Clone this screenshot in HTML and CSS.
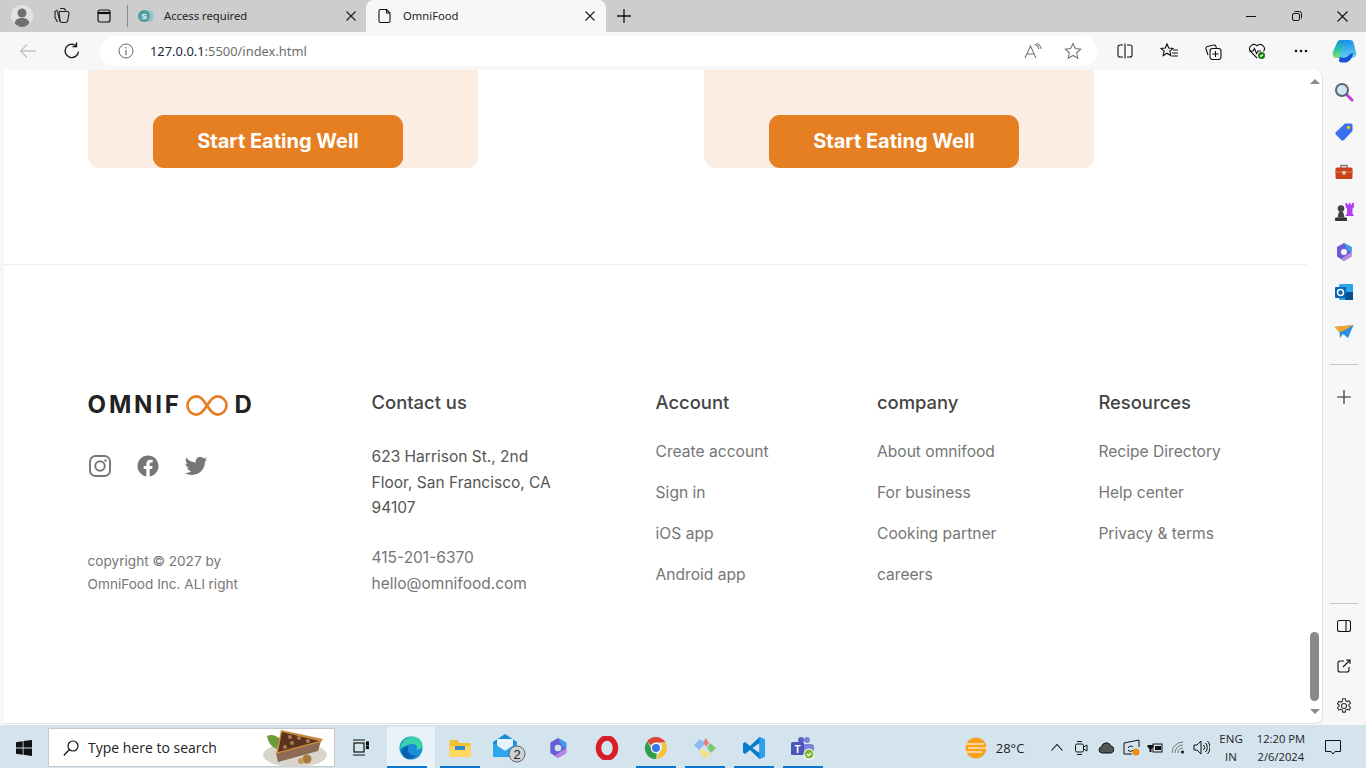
FILE: index.html
```html
<!DOCTYPE html>
<html lang="en">
<head>
<meta charset="utf-8">
<title>OmniFood</title>
<link rel="stylesheet" href="styles.css">
</head>
<body>
<div class="tabstrip">
  <div class="avatar-slot">
    <svg width="24" height="24" viewBox="0 0 24 24"><circle cx="12" cy="12" r="11" fill="#e3e3e3"/><circle cx="12" cy="9" r="4.5" fill="#707070"/><path d="M4.5 19c1-4 4-5 7.500-5s6.500 1 7.500 5c-2 2.500-5 4-7.500 4s-5.500-1.500-7.500-4z" fill="#707070"/></svg>
  </div>
  <div class="strip-icon">
    <svg width="18" height="18" viewBox="0 0 18 18" fill="none" stroke="#222" stroke-width="1.100"><path d="M7 1.500h4l2 2M4.500 3 2 4.500v6l2.500 4.500"/><path d="M6 4.500h8.500a1.500 1.500 0 0 1 1.500 1.800l-1.200 7a2.500 2.500 0 0 1-2.500 2.200H9a2 2 0 0 1-2-1.800z"/><path d="M4.500 4.500 7 14.500"/></svg>
  </div>
  <div class="strip-icon">
    <svg width="16" height="16" viewBox="0 0 16 16" fill="none" stroke="#111" stroke-width="1.200"><rect x="2" y="2" width="12" height="12" rx="2"/><path d="M2 5h12" stroke-width="2.200"/></svg>
  </div>
  <div class="strip-sep"></div>
  <div class="tab">
    <svg class="tab-favicon" width="16" height="16" viewBox="0 0 16 16"><circle cx="10" cy="8" r="6" fill="#8fc6c8"/><circle cx="6" cy="8" r="6" fill="#4f9ea4"/><text x="3.500" y="11" class="favicon-letter">S</text></svg>
    <span class="tab-title">Access required</span>
    <svg class="tab-close" width="10" height="10" viewBox="0 0 10 10" stroke="#222" stroke-width="1.200"><path d="M0.500 0.500l9 9M9.500 0.500l-9 9"/></svg>
  </div>
  <div class="tab tab-active">
    <svg class="tab-favicon" width="16" height="16" viewBox="0 0 16 16" fill="none" stroke="#111" stroke-width="1.100"><path d="M3.500 1.500h6l3.500 3.500v8a1.500 1.500 0 0 1-1.500 1.500h-8A1.500 1.500 0 0 1 2 13V3a1.500 1.500 0 0 1 1.500-1.500zM9.500 1.500V5H13"/></svg>
    <span class="tab-title">OmniFood</span>
    <svg class="tab-close" width="10" height="10" viewBox="0 0 10 10" stroke="#222" stroke-width="1.200"><path d="M0.500 0.500l9 9M9.500 0.500l-9 9"/></svg>
  </div>
  <div class="new-tab">
    <svg width="14" height="14" viewBox="0 0 14 14" stroke="#111" stroke-width="1.300"><path d="M7 0v14M0 7h14"/></svg>
  </div>
  <div class="window-controls">
    <svg width="10" height="10" viewBox="0 0 10 10" stroke="#111"><path d="M0 5.500h10"/></svg>
    <svg width="10" height="10" viewBox="0 0 10 10" fill="none" stroke="#111"><rect x="0.500" y="2.500" width="7" height="7" rx="1.500"/><path d="M2.500 0.500h5a2 2 0 0 1 2 2v5"/></svg>
    <svg width="11" height="11" viewBox="0 0 11 11" stroke="#111" stroke-width="1.100"><path d="M0.500 0.500l10 10M10.500 0.500l-10 10"/></svg>
  </div>
</div>

<div class="toolbar">
  <svg class="tool-back" width="18" height="16" viewBox="0 0 18 16" fill="none" stroke="#c4c4c4" stroke-width="1.300"><path d="M17 8H1.500M8 1.500 1.500 8 8 14.500"/></svg>
  <svg class="tool-reload" width="18" height="18" viewBox="0 0 18 18" fill="none" stroke="#111" stroke-width="1.300"><path d="M15.500 9.500A6.700 6.700 0 1 1 13 3.600"/><path d="M13.500 0.500v4h-4"/></svg>
  <div class="address">
    <svg class="info-icon" width="16" height="16" viewBox="0 0 16 16" fill="none" stroke="#666"><circle cx="8" cy="8" r="7"/><path d="M8 7v5M8 4v1.500" stroke-width="1.200"/></svg>
    <span class="url"><span class="url-host">127.0.0.1</span>:5500/index.html</span>
    <svg class="addr-read" width="18" height="17" viewBox="0 0 18 17" fill="none" stroke="#757575" stroke-width="1.100"><path d="M1 15 6.500 3 12 15M3 11h7"/><path d="M10.500 1.500c2.500.3 4 2 4.300 4.500M12.500 0.500c2.500.8 4.300 2.800 4.600 5.500"/></svg>
    <svg class="addr-star" width="18" height="18" viewBox="0 0 18 18" fill="none" stroke="#757575" stroke-width="1.100"><path d="m9 1.500 2.300 5 5.400.6-4 3.700 1.100 5.400L9 13.500l-4.800 2.700 1.100-5.400-4-3.700 5.400-.6z"/></svg>
  </div>
  <div class="tool-icons">
    <div class="tool-slot"><svg width="16" height="16" viewBox="0 0 16 16" fill="none" stroke="#111" stroke-width="1.100"><path d="M6 2H3a2 2 0 0 0-2 2v8a2 2 0 0 0 2 2h3M10 2h3a2 2 0 0 1 2 2v8a2 2 0 0 1-2 2h-3M8 0.500v15"/></svg></div>
    <div class="tool-slot"><svg width="18" height="18" viewBox="0 0 18 18" fill="none" stroke="#111" stroke-width="1.100"><path d="m7 2 1.700 4 4.300.4-3.200 2.800 1 4.300L7 11.200 3.200 13.500l1-4.300L1 6.400 5.300 6z"/><path d="M13 8h5M12 11h6M12 14h6"/></svg></div>
    <div class="tool-slot"><svg width="18" height="18" viewBox="0 0 18 18" fill="none" stroke="#111" stroke-width="1.100"><path d="M4 13 2 7a2 2 0 0 1 1.500-2.500l6-1.500a2 2 0 0 1 2.500 1.500l.3 1.500"/><rect x="6" y="6.500" width="11" height="11" rx="2.500"/><path d="M11.500 9v6M8.500 12h6"/></svg></div>
    <div class="tool-slot"><svg width="18" height="18" viewBox="0 0 18 18" fill="none" stroke="#111" stroke-width="1.100"><path d="M9 16 2.500 9.500a4.300 4.300 0 0 1 6.500-5.600 4.300 4.300 0 0 1 6.500 5.600"/><path d="M1 9h4l1.500-2.500 2 5L10 9h3"/><circle cx="13.500" cy="13.500" r="3.500" fill="#107c10" stroke="none"/><path d="m12 13.500 1 1 2-2" stroke="#fff"/></svg></div>
    <div class="tool-slot"><svg width="14" height="4" viewBox="0 0 14 4" fill="#111"><circle cx="2" cy="2" r="1.300"/><circle cx="7" cy="2" r="1.300"/><circle cx="12" cy="2" r="1.300"/></svg></div>
    <div class="tool-slot tool-copilot"><svg width="25" height="24" viewBox="0 0 25 24"><defs><linearGradient id="cpL" x1="0" y1="0" x2="0" y2="1"><stop offset="0" stop-color="#1f8fe0"/><stop offset="0.5" stop-color="#22c4a8"/><stop offset="1" stop-color="#8fdc68"/></linearGradient><linearGradient id="cpR" x1="0" y1="0" x2="0" y2="1"><stop offset="0" stop-color="#1e90e8"/><stop offset="1" stop-color="#60d0f0"/></linearGradient></defs><path d="M9 1h9c2 0 3 1 3.500 2.500L24 13c1 3-1 6-4 6H6c-3.500 0-6-3-5-6L5 4c.6-2 2-3 4-3z" fill="url(#cpR)"/><path d="M9 1h5.500c-2 1-3 3-3.800 5.500L8.500 15c-.8 2.500-2.500 4-4.500 4-2.500 0-4-2.500-3-6L5 4c.6-2 2-3 4-3z" fill="url(#cpL)"/><path d="M8 18c4 1.500 8 .5 10-3l3-1c-.5 4-3 9-7 9.500H10c-2 0-3.500-1-3-3z" fill="#1a4fd8"/></svg></div>
  </div>
</div>

<div class="middle">
  <div class="page-gutter"></div>
  <div class="page">
    <main class="page-content">
      <section class="cards">
        <div class="card"><a class="btn">Start Eating Well</a></div>
        <div class="card"><a class="btn">Start Eating Well</a></div>
      </section>
      <footer class="footer">
        <div class="footer-col">
          <div class="logo">
            <span class="logo-text">OMNIF</span>
            <svg class="logo-loop" width="44" height="21" viewBox="0 0 46 22" fill="none" stroke="#e67e22" stroke-width="2.800"><path d="M23 11c-3-5-6-9.500-11-9.500a9.500 9.500 0 0 0 0 19c5 0 8-4.500 11-9.500s6-9.500 11-9.500a9.500 9.500 0 0 1 0 19c-5 0-8-4.500-11-9.500z"/></svg>
            <span class="logo-text logo-d">D</span>
          </div>
          <div class="socials">
            <svg width="24" height="24" viewBox="0 0 24 24" fill="none" stroke="#767676" stroke-width="1.900"><rect x="2" y="2" width="20" height="20" rx="5.500"/><circle cx="12" cy="12" r="4.700"/><circle cx="17.500" cy="6.500" r="1.200" fill="#767676" stroke="none"/></svg>
            <svg width="24" height="24" viewBox="0 0 512 512" fill="#767676"><path d="M480 257.350c0-123.700-100.300-224-224-224s-224 100.300-224 224c0 111.800 81.900 204.470 189 221.290V322.120h-56.890v-64.770H221V208c0-56.130 33.450-87.160 84.610-87.160 24.510 0 50.150 4.380 50.150 4.380v55.130H327.500c-27.810 0-36.510 17.260-36.510 35v42h62.120l-9.920 64.770H291v156.540c107.100-16.810 189-109.480 189-221.310z"/></svg>
            <svg width="24" height="24" viewBox="0 0 512 512" fill="#767676"><path d="M496 109.500a201.800 201.800 0 0 1-56.550 15.300 97.510 97.510 0 0 0 43.330-53.900 198.100 198.100 0 0 1-62.520 23.500A99.140 99.140 0 0 0 348.310 64c-54.420 0-98.460 43.400-98.460 96.900a93.210 93.210 0 0 0 2.540 22.100 280.700 280.700 0 0 1-203-101.300A95.690 95.690 0 0 0 36 130.400c0 33.600 17.530 63.300 44 80.700A97.500 97.500 0 0 1 35.220 199v1.200c0 47 34 86.100 79 95a100.760 100.760 0 0 1-25.940 3.400 94.380 94.380 0 0 1-18.510-1.800c12.510 38.500 48.920 66.500 92.050 67.300A199.590 199.590 0 0 1 39.500 405.600a203 203 0 0 1-23.500-1.400A278.680 278.680 0 0 0 166.740 448c181.360 0 280.440-147.700 280.440-275.800 0-4.200-.11-8.400-.31-12.500A198.480 198.480 0 0 0 496 109.500z"/></svg>
          </div>
          <p class="copyright">copyright © 2027 by<br>OmniFood Inc. ALl right</p>
        </div>
        <div class="footer-col">
          <h3 class="footer-heading">Contact us</h3>
          <address class="contact">
            <p class="contact-address">623 Harrison St., 2nd<br>Floor, San Francisco, CA<br>94107</p>
            <p class="contact-line">415-201-6370</p>
            <p class="contact-line">hello@omnifood.com</p>
          </address>
        </div>
        <nav class="footer-col">
          <h3 class="footer-heading">Account</h3>
          <ul class="links"><li>Create account</li><li>Sign in</li><li>iOS app</li><li>Android app</li></ul>
        </nav>
        <nav class="footer-col">
          <h3 class="footer-heading">company</h3>
          <ul class="links"><li>About omnifood</li><li>For business</li><li>Cooking partner</li><li>careers</li></ul>
        </nav>
        <nav class="footer-col">
          <h3 class="footer-heading">Resources</h3>
          <ul class="links"><li>Recipe Directory</li><li>Help center</li><li>Privacy &amp; terms</li></ul>
        </nav>
      </footer>
    </main>
    <div class="scrollbar">
      <span class="arrow-up"></span>
      <span class="thumb"></span>
      <span class="arrow-down"></span>
    </div>
  </div>
  <aside class="sidebar">
    <div class="side-group">
      <div class="side-slot"><svg width="20" height="20" viewBox="0 0 20 20"><path d="m12 12 6 6" stroke="#c03ad6" stroke-width="3" stroke-linecap="round"/><circle cx="8" cy="8" r="6" fill="#cfe6f2" stroke="#5a6670" stroke-width="2"/></svg></div>
      <div class="side-slot"><svg width="20" height="20" viewBox="0 0 20 20"><path d="M11 1.500h6a1.500 1.500 0 0 1 1.500 1.500v6L10 18a2 2 0 0 1-2.800 0L2 12.800A2 2 0 0 1 2 10z" fill="#3a6ff0"/><circle cx="14.500" cy="5.500" r="1.700" fill="#f5c518"/></svg></div>
      <div class="side-slot"><svg width="20" height="20" viewBox="0 0 20 20"><path d="M7 6V3.500h6V6" fill="none" stroke="#7a7a7a" stroke-width="1.500"/><rect x="1.500" y="5.500" width="17" height="11.500" rx="1.500" fill="#c8421a"/><path d="M1.500 10h17" stroke="#e36a30" stroke-width="1.500"/><rect x="8.500" y="9" width="3" height="3.500" fill="#d8d8d8"/></svg></div>
      <div class="side-slot"><svg width="20" height="20" viewBox="0 0 20 20"><path d="M11.500 1h2v1.500h1.500V1h1.500v1.500H18V1h2v4l-1.500 1.500v5L20 14h-8.500l1.500-2.500v-5L11.500 5z" fill="#b040f0"/><circle cx="7" cy="6.500" r="3.300" fill="#444"/><path d="M5 9.500h4l1.500 6h-7z" fill="#444"/><rect x="1" y="15.500" width="12" height="3.500" rx="1" fill="#333"/></svg></div>
      <div class="side-slot"><svg width="20" height="20" viewBox="0 0 20 20"><path d="M10 1 17.500 5v9.500L10 19l-7-4.500V5z" fill="#6a5cd8"/><path d="M10 1 17.500 5v5l-4-2z" fill="#3a9ee8"/><path d="M17.500 10v4.500L10 19l-3-2z" fill="#b78ae0"/><circle cx="10" cy="10" r="3" fill="#f7f7f7"/></svg></div>
      <div class="side-slot"><svg width="20" height="20" viewBox="0 0 20 20"><rect x="5" y="2" width="14" height="16" rx="1" fill="#28a8ea"/><rect x="11" y="10" width="8" height="8" fill="#0a4f96"/><rect x="1" y="5" width="11" height="11" rx="1" fill="#0a64b4"/><circle cx="6.500" cy="10.500" r="3" fill="none" stroke="#fff" stroke-width="1.500"/></svg></div>
      <div class="side-slot"><svg width="20" height="20" viewBox="0 0 20 20"><path d="M0.500 5 19.500 3 14 16 9 12 6 16l-.5-6z" fill="#2b8fe0"/><path d="M0.500 5 19.500 3 9 9 5.500 10z" fill="#f5a623"/></svg></div>
      <div class="side-divider"></div>
      <div class="side-slot"><svg width="14" height="14" viewBox="0 0 14 14" stroke="#222" stroke-width="1.100"><path d="M7 0v14M0 7h14"/></svg></div>
    </div>
    <div class="side-group">
      <div class="side-divider"></div>
      <div class="side-slot"><svg width="14" height="14" viewBox="0 0 14 14" fill="none" stroke="#111" stroke-width="1.100"><rect x="0.500" y="1.500" width="13" height="11" rx="2"/><path d="M9 1.500v11"/></svg></div>
      <div class="side-slot"><svg width="14" height="14" viewBox="0 0 14 14" fill="none" stroke="#111" stroke-width="1.100"><path d="M7 2H3a2 2 0 0 0-2 2v7a2 2 0 0 0 2 2h7a2 2 0 0 0 2-2V8M6 8l7-7M9 1h4v4"/></svg></div>
      <div class="side-slot"><svg width="16" height="16" viewBox="0 0 16 16" fill="none" stroke="#333" stroke-width="1.100"><circle cx="8" cy="8" r="2.500"/><path d="M6.700 0.800h2.600l.4 2 1.500.8 2-.7 1.300 2.300-1.600 1.400v1.700l1.600 1.400-1.300 2.300-2-.7-1.500.8-.4 2H6.700l-.4-2-1.500-.8-2 .7-1.300-2.300 1.600-1.400V7.100L1.500 5.700l1.300-2.300 2 .7 1.500-.8z"/></svg></div>
    </div>
  </aside>
</div>

<div class="taskbar">
  <div class="start"><svg width="16" height="16" viewBox="0 0 16 16" fill="#111"><path d="M0 2.200 6.700 1.200V7.500H0zM7.500 1.100 16 0v7.500H7.500zM0 8.400h6.700v6.400L0 13.800zM7.500 8.400H16V16l-8.500-1.200z"/></svg></div>
  <div class="search">
    <svg class="search-icon" width="16" height="16" viewBox="0 0 16 16" fill="none" stroke="#111" stroke-width="1.200"><circle cx="10" cy="6" r="5"/><path d="M6.500 9.500 0.800 15.500"/></svg>
    <span class="search-text">Type here to search</span>
    <svg class="search-pie" width="66" height="38" viewBox="0 0 66 38"><ellipse cx="33" cy="26" rx="32" ry="12" fill="#d8d6cc"/><path d="M5 7c4-2 9-1 13 3l-3 10C9 18 6 13 5 7z" fill="#6d9a3a"/><path d="M14 24 59 12l-3 10-40 11z" fill="#8c6a56"/><path d="M19 1 61 10 59 13 14 25z" fill="#c98a3e"/><path d="M20 3 57 12 16 23z" fill="#5a3320"/><circle cx="28" cy="8" r="2" fill="#b07a4a"/><circle cx="37" cy="9" r="2" fill="#b07a4a"/><circle cx="46" cy="12" r="2" fill="#b07a4a"/><circle cx="30" cy="14" r="2" fill="#b07a4a"/><circle cx="23" cy="18" r="2" fill="#b07a4a"/><circle cx="45" cy="30" r="4.500" fill="#a87a3c"/><circle cx="39" cy="32" r="3" fill="#c09a60"/></svg>
  </div>
  <div class="task-view"><svg width="17" height="17" viewBox="0 0 17 17" fill="none" stroke="#111" stroke-width="1.200"><rect x="2" y="4" width="10" height="9"/><path d="M1 1h12M1 16h12"/><rect x="14.500" y="3" width="2" height="2.500" fill="#111"/><rect x="14.500" y="7" width="2" height="2.500" fill="#111"/></svg></div>
  <div class="slot slot-edge"><svg width="24" height="24" viewBox="0 0 24 24"><circle cx="12" cy="12" r="11.500" fill="#1a8fd8"/><path d="M1 13C2 5 8 0.500 14 0.500c5 0 9.500 4 9.500 9 0 3-3 4.500-6 4 1-2 .5-5-3-5.500-5-.5-9 2-13.500 5z" fill="#39d1a8"/><path d="M9 14c0 4 4 6 8 5-2 3-5 4.500-8 4-4-1-7-5-6-10 2-2 4-3 7-3-1 1-1 2-1 4z" fill="#0c5fb0"/></svg></div>
  <div class="slot slot-on"><svg width="22" height="20" viewBox="0 0 22 20"><path d="M0.500 2h8l2 3h11v14H0.500z" fill="#f2c12e"/><path d="M0.500 8h21v11H0.500z" fill="#ffd75e"/><path d="M6 8h10v4H6z" fill="#2b8fd8"/></svg></div>
  <div class="slot"><svg width="34" height="30" viewBox="0 0 34 30"><path d="M1 9 13 1l12 8v15H1z" fill="#1c8ed8"/><path d="M5 6h16v7l-8 5-8-5z" fill="#e8f2fa"/><path d="M1 10l12 8 12-8v14H1z" fill="#28a8ea"/><circle cx="25" cy="21" r="8" fill="#ccd2d6" stroke="#666"/><text x="25" y="26" class="badge-num">2</text></svg></div>
  <div class="slot"><svg width="22" height="24" viewBox="0 0 20 20"><path d="M10 1 17.500 5v9.500L10 19l-7-4.500V5z" fill="#6a5cd8"/><path d="M10 1 17.500 5v5l-4-2z" fill="#3a9ee8"/><path d="M17.500 10v4.500L10 19l-3-2z" fill="#b78ae0"/><circle cx="10" cy="10" r="3" fill="#d3e4ee"/></svg></div>
  <div class="slot"><svg width="24" height="24" viewBox="0 0 24 24" fill="none"><ellipse cx="12" cy="12" rx="8.500" ry="10" stroke="#d81e28" stroke-width="5.500"/></svg></div>
  <div class="slot slot-on"><svg width="24" height="24" viewBox="0 0 24 24"><path d="M12 1a11 11 0 0 1 9.500 5.500H12a5.500 5.500 0 0 0-5 3L3.200 5.200A11 11 0 0 1 12 1z" fill="#db4437"/><path d="M21.500 6.500A11 11 0 0 1 12 23l4.700-8.200a5.500 5.500 0 0 0 0-8.300z" fill="#fbc02d"/><path d="M12 23A11 11 0 0 1 3.200 5.200L7.800 13a5.500 5.500 0 0 0 5 4z" fill="#2e9e4a"/><circle cx="12" cy="12" r="5.200" fill="#fff"/><circle cx="12" cy="12" r="4" fill="#3a78e8"/></svg></div>
  <div class="slot slot-on"><svg width="24" height="24" viewBox="0 0 24 24"><path d="M12 8 7 3 1 9l5 5z" fill="#8ab8f0"/><path d="M13 2l3 5-3 4-3-5z" fill="#e88080"/><path d="M17 7l6 5-5 5-4-5z" fill="#80c870"/><path d="M6 15l5-2 2 4 2-2 2 2-5 6z" fill="#f5e080"/></svg></div>
  <div class="slot slot-on"><svg width="24" height="24" viewBox="0 0 24 24"><path d="M17.500 1 23 3.500v17L17.500 23 8 14l-5 4-2-1.500v-9L3 6l5 4z" fill="#0a7ccc"/><path d="M17.500 7 10.500 12l7 5z" fill="#d3e4ee"/><path d="M17.500 1 23 3.500v17L17.500 23z" fill="#2ba0e8"/></svg></div>
  <div class="slot slot-on"><svg width="26" height="24" viewBox="0 0 26 24"><circle cx="17" cy="4" r="3" fill="#7b83d8"/><rect x="12" y="8" width="12" height="10" rx="3" fill="#7b83d8"/><circle cx="11" cy="4" r="3" fill="#5a62c4"/><rect x="1" y="6" width="13" height="13" rx="1.500" fill="#4b53bc"/><text x="7.500" y="16.500" class="teams-t">T</text><circle cx="19" cy="18" r="5.500" fill="#fff"/><circle cx="19" cy="18" r="4.500" fill="#7cb83a"/><path d="m16.800 18 1.600 1.600 2.800-2.800" fill="none" stroke="#fff" stroke-width="1.200"/></svg></div>
  <div class="tray">
    <svg class="tray-weather" width="24" height="24" viewBox="0 0 24 24"><circle cx="12" cy="12" r="10.500" fill="#f6a21e"/><path d="M2 8h18M4 12h20M0 16h18" stroke="#fbe6b8" stroke-width="1.500"/></svg>
    <span class="tray-temp">28°C</span>
    <svg class="tray-chevron" width="12" height="7" viewBox="0 0 12 7" fill="none" stroke="#111" stroke-width="1.100"><path d="m0.500 6.500 5.500-6 5.500 6"/></svg>
    <div class="tray-icons">
      <svg width="16" height="16" viewBox="0 0 16 16" fill="none" stroke="#111"><rect x="1.500" y="4" width="8" height="8" rx="1.500"/><path d="m9.500 7 3.500-2v6l-3.500-2zM3 1.500h5M3 14.500h5"/></svg>
      <svg width="17" height="13" viewBox="0 0 17 13" fill="#555" stroke="#111"><path d="M4 12a3.200 3.200 0 0 1-.5-6.300A5 5 0 0 1 13 5a3.600 3.600 0 0 1 0 7z"/></svg>
      <svg width="17" height="17" viewBox="0 0 17 17" fill="none" stroke="#111"><path d="M1 4 16 1v7M1 4v11h8"/><path d="M5 9a3 3 0 0 1 5-1M10 11a3 3 0 0 1-5 0"/><circle cx="13" cy="13" r="3.500" fill="#f08a10" stroke="none"/></svg>
      <svg width="16" height="12" viewBox="0 0 16 12" fill="#111"><rect x="6" y="2" width="9" height="8" fill="none" stroke="#111"/><rect x="8" y="4" width="6" height="4"/><path d="M2 0v3M5 0v3M0.500 3h6v2l-2 2v3h-2V7l-2-2z"/></svg>
      <svg width="15" height="13" viewBox="0 0 15 13" fill="none" stroke="#777"><path d="M1 12a11 11 0 0 1 11-11M4 12a8 8 0 0 1 8-8M7 12a5 5 0 0 1 5-5"/><circle cx="11.500" cy="11" r="1.500" fill="#111" stroke="none"/></svg>
      <svg width="17" height="15" viewBox="0 0 17 15" fill="none" stroke="#111"><path d="M1 5h3l4-4v13l-4-4H1zM10.500 5a3.500 3.500 0 0 1 0 5M12.500 3a6.500 6.500 0 0 1 0 9M14.500 1a9.500 9.500 0 0 1 0 13"/></svg>
    </div>
    <div class="tray-lang"><span>ENG</span><span>IN</span></div>
    <div class="tray-clock"><span>12:20 PM</span><span>2/6/2024</span></div>
    <svg class="tray-notify" width="16" height="15" viewBox="0 0 16 15" fill="none" stroke="#111"><path d="M0.500 0.500h15v11H10l-2 2.500-2-2.500H0.500z"/></svg>
  </div>
</div>
</body>
</html>
```

FILE: styles.css
```css
* { box-sizing: border-box; }
html, body { margin: 0; padding: 0; }
body {
  width: 1366px;
  height: 768px;
  overflow: hidden;
  display: flex;
  flex-direction: column;
  background: #f7f7f7;
  font-family: "Noto Sans", sans-serif;
}

.tabstrip {
  height: 32px;
  flex: none;
  display: flex;
  align-items: center;
  background: #cdcdcd;
  font-size: 11.250px;
  color: #222;
}
.avatar-slot { width: 42px; padding-left: 10px; display: flex; }
.strip-icon { width: 40px; display: flex; justify-content: center; }
.strip-icon + .strip-icon { margin-left: 2px; }
.strip-sep { width: 1px; height: 22px; background: #8a8a8a; margin: 0 10px 0 3px; }
.tab {
  width: 228px;
  height: 32px;
  display: flex;
  align-items: center;
  padding-right: 10px;
}
.tab-favicon { flex: none; }
.favicon-letter { font: 700 8px "Liberation Sans", sans-serif; fill: #fff; }
.tab-title { flex: 1; margin: 0 0 2px 10px; }
.tab-close { flex: none; }
.tab-active {
  width: 240px;
  padding: 0 11px;
  background: #f7f7f7;
  border-radius: 8px 8px 0 0;
}
.new-tab { width: 36px; display: flex; justify-content: center; }
.window-controls {
  margin-left: auto;
  width: 122px;
  padding: 0 18px 0 2px;
  display: flex;
  justify-content: space-between;
  align-items: center;
}

.toolbar {
  height: 38px;
  flex: none;
  display: flex;
  align-items: center;
  background: #f7f7f7;
  padding-left: 19px;
}
.tool-back { flex: none; }
.tool-reload { flex: none; margin-left: 26px; }
.address {
  width: 998px;
  height: 30px;
  margin-left: 19px;
  background: #fff;
  border-radius: 15px;
  display: flex;
  align-items: center;
  padding: 0 15px 0 18px;
}
.url {
  margin-left: 16px;
  flex: 1;
  font-size: 12.900px;
  color: #6e6e6e;
}
.url-host { color: #1c2a3a; }
.addr-read { margin-right: 22px; }
.tool-icons {
  flex: 1;
  display: flex;
  align-items: center;
  padding-left: 6px;
}
.tool-slot { width: 44px; flex: none; display: flex; align-items: center; justify-content: center; }
.tool-copilot { margin-left: -1px; }

.middle { flex: 1; min-height: 0; display: flex; }
.page-gutter { width: 4px; flex: none; }
.page {
  width: 1319px;
  flex: none;
  display: flex;
  background: #fff;
  border-radius: 0 8px 8px 0;
  border-right: 1px solid #e2e2e2;
  border-bottom: 1px solid #e2e2e2;
  overflow: hidden;
}
.page-content {
  width: 1303px;
  flex: none;
  font-family: Inter, "Noto Sans", sans-serif;
}
.cards {
  display: flex;
  gap: 226px;
  padding-left: 84px;
}
.card {
  width: 390px;
  height: 98px;
  padding: 45px 0 0 65px;
  background: #fbede1;
  border-radius: 0 0 11px 11px;
}
.btn {
  display: block;
  width: 250px;
  height: 53px;
  background: #e67e22;
  border-radius: 11px;
  color: #fff;
  font-size: 20px;
  font-weight: 700;
  line-height: 53px;
  text-align: center;
}
.footer {
  margin-top: 96px;
  height: 460px;
  padding: 124px 0 0 83.600px;
  border-top: 1px solid #eee;
  display: grid;
  grid-template-columns: 284px 284px 221.400px 221.400px 1fr;
  align-content: start;
}
.logo { display: flex; align-items: center; height: 22px; margin-top: 5px; }
.logo-text {
  font-size: 24px;
  font-weight: 700;
  letter-spacing: 2.800px;
  color: #222;
  line-height: 22px;
}
.logo-loop { margin-left: 3px; }
.logo-d { margin-left: 6px; letter-spacing: 0; }
.socials { display: flex; gap: 24px; margin-top: 38px; }
.copyright {
  margin: 72px 0 0;
  font-size: 13.600px;
  line-height: 23px;
  color: #767676;
}
.footer-heading {
  margin: 0;
  font-size: 18.400px;
  line-height: 26px;
  font-weight: 500;
  color: #444;
}
.contact { font-style: normal; margin-top: 29px; font-size: 15.500px; }
.contact-address { margin: 0 0 24px; line-height: 25.600px; color: #555; }
.contact-line { margin: 0; line-height: 26px; color: #767676; }
.links {
  list-style: none;
  margin: 25px 0 0;
  padding: 0;
  display: flex;
  flex-direction: column;
  gap: 18px;
  font-size: 15.600px;
  line-height: 23px;
  color: #767676;
}

.scrollbar {
  width: 15px;
  flex: none;
  display: flex;
  flex-direction: column;
  align-items: center;
  padding: 9px 0 9px;
}
.arrow-up {
  border: 5px solid transparent;
  border-top: 0;
  border-bottom: 5px solid #8a8a8a;
}
.thumb {
  width: 9px;
  height: 69px;
  margin-top: auto;
  background: #8a8a8a;
  border-radius: 5px;
}
.arrow-down {
  margin-top: 8px;
  border: 5px solid transparent;
  border-bottom: 0;
  border-top: 5px solid #8a8a8a;
}

.sidebar {
  flex: 1;
  display: flex;
  flex-direction: column;
  justify-content: space-between;
  padding: 2px 1px 0 0;
  margin-bottom: -2px;
}
.side-group { display: flex; flex-direction: column; }
.side-slot { height: 40px; display: flex; align-items: center; justify-content: center; }
.side-divider { height: 1px; background: #c8c8c8; margin: 12px 7px 12px 7px; }
.side-group + .side-group .side-divider { margin: 0 7px 2px 7px; }

.taskbar {
  height: 43px;
  flex: none;
  display: flex;
  align-items: center;
  background: #d3e4ee;
  margin-top: 1px;
  padding-top: 2px;
  font-family: "Open Sans", sans-serif;
  color: #111;
}
.start { width: 48px; display: flex; justify-content: center; }
.search {
  width: 287px;
  height: 39px;
  background: #fff;
  border: 1px solid #c8c8c8;
  display: flex;
  align-items: center;
  padding-left: 14px;
}
.search-text { margin-left: 9px; font-size: 14px; color: #222; }
.search-pie { margin-left: auto; margin-right: 6px; }
.task-view { width: 52px; padding-right: 2px; display: flex; justify-content: center; }
.slot {
  width: 49px;
  height: 41px;
  display: flex;
  align-items: center;
  justify-content: center;
  position: relative;
}
.slot-on::after {
  content: "";
  position: absolute;
  left: 5px;
  bottom: 0;
  width: 40px;
  height: 2px;
  background: #0a78d0;
}
.slot-edge { width: 48px; background: #e8f2f8; }
.slot-edge::after {
  content: "";
  position: absolute;
  left: 0;
  bottom: 0;
  width: 40px;
  height: 2px;
  background: #0a78d0;
}
.badge-num { font: 400 13px "Liberation Sans", sans-serif; text-anchor: middle; fill: #222; }
.teams-t { font: 700 10px "Liberation Sans", sans-serif; text-anchor: middle; fill: #fff; }
.tray {
  margin-left: auto;
  display: flex;
  align-items: center;
  font-size: 11.500px;
  color: #222;
}
.tray-temp { margin-left: 8px; font-size: 13px; }
.tray-chevron { margin-left: 27px; }
.tray-icons { display: flex; align-items: center; gap: 7.600px; margin-left: 11px; }
.tray-lang, .tray-clock {
  display: flex;
  flex-direction: column;
  align-items: center;
  line-height: 18px;
}
.tray-lang { margin-left: 9px; }
.tray-clock { margin-left: 14px; font-size: 11.200px; }
.tray-notify { margin: 0 25px 0 20px; }
```
